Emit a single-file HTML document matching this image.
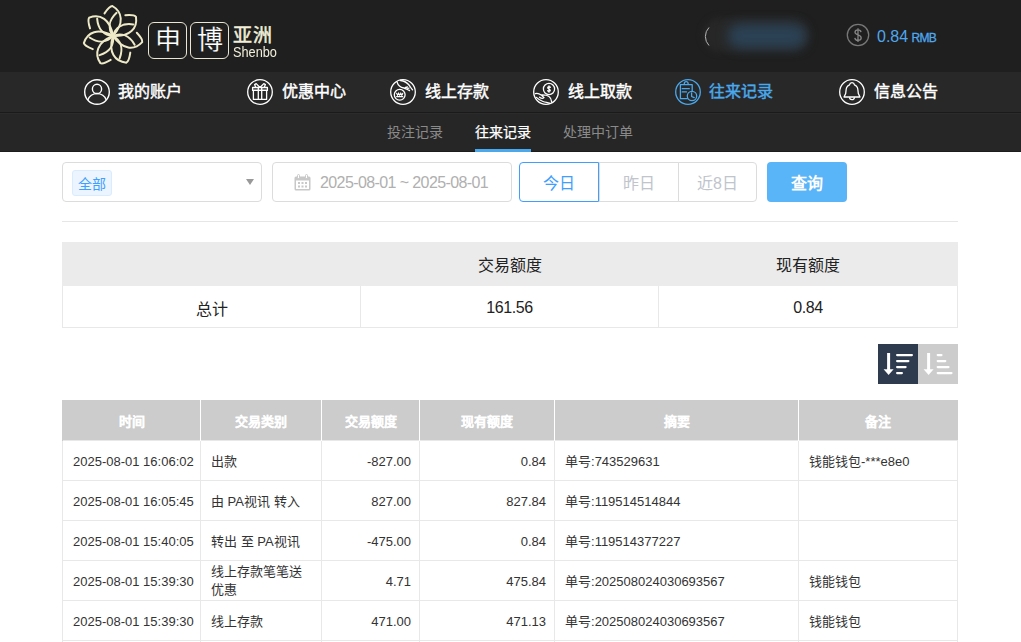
<!DOCTYPE html>
<html lang="zh-CN">
<head>
<meta charset="utf-8">
<style>
*{box-sizing:border-box;margin:0;padding:0}
html,body{width:1021px;height:642px;overflow:hidden;background:#fff;font-family:"Liberation Sans",sans-serif;color:#333}
.abs{position:absolute}
#hdr{position:absolute;left:0;top:0;width:1021px;height:72px;background:#1f1f1f}
#nav{position:absolute;left:0;top:72px;width:1021px;height:40px;background:#282828}
#sep{position:absolute;left:0;top:112px;width:1021px;height:1px;background:#1a1a1a}
#sub{position:absolute;left:0;top:113px;width:1021px;height:39px;background:#262626}
#subline{position:absolute;left:0;top:151px;width:1021px;height:1px;background:#1c1c1c}
.logo-box{position:absolute;top:22px;width:39px;height:37px;border:1.3px solid #e9e6d2;border-radius:6px;color:#fff;font-size:26px;line-height:35px;text-align:center;font-weight:normal;-webkit-text-stroke:0.2px #1f1f1f}
.navi{position:absolute;top:72px;height:40px;color:#fff;font-size:16px;font-weight:normal;-webkit-text-stroke:0.45px currentColor;line-height:40px;white-space:nowrap}
.navi svg{position:absolute;left:0;top:6px}
.navi span{position:absolute;top:0}
.subi{position:absolute;top:113px;height:39px;line-height:39px;font-size:14px;color:#8a8a8a;white-space:nowrap}
.box{position:absolute;border:1px solid #dcdcdc;border-radius:4px;background:#fff}
.btn{position:absolute;top:162px;height:40px;line-height:42px;text-align:center;font-size:16px;color:#c0c4cc;border:1px solid #dcdcdc;background:#fff}
table{border-collapse:collapse;position:absolute;table-layout:fixed}
#sum{left:62px;top:242px;width:895px}
#sum td{border:1px solid #e8e8e8;text-align:center;font-size:16px;color:#222}
#sum tr.h td{background:#ebebeb;height:43px;border-color:#ebebeb}
#sum tr.b td{height:42px;padding-top:2px}
#sum .num{letter-spacing:-0.4px}
#main{left:62px;top:400px;width:895px}
#main th{background:#cccccc;color:#fff;font-size:13px;font-weight:bold;-webkit-text-stroke:0.15px #fff;padding-top:2px;height:40px;border-left:1px solid #fff;text-align:center}
#main th:first-child{border-left:1px solid #ccc}
#main td{height:40px;border:1px solid #e8e8e8;font-size:13px;color:#333;padding:3px 10px 0;line-height:16px;white-space:nowrap}
#main td.r{text-align:right;padding-right:8px}
.num{}
</style>
</head>
<body>
<div id="hdr"></div>
<div id="nav"></div>
<div id="sep"></div>
<div id="sub"></div>
<div class="abs" style="left:0;top:113px;width:1021px;height:1px;background:#2b2b2b"></div>
<div id="subline"></div>

<!-- logo flower -->
<svg class="abs" style="left:80.5px;top:4px" width="63" height="63" viewBox="-30.4 -30.4 60 60">
  <g fill="none" stroke="#eeeac8" stroke-width="1.9" stroke-linecap="round">
    <g transform="rotate(0.0)"><path d="M-8,-21.5 C-5,-26 -2,-28.5 -0.5,-28.5 C9,-23 11,-12 0,0 M0,0 C-5,-7 -4,-15 3.5,-22"/></g>
    <g transform="rotate(51.43)"><path d="M-8,-21.5 C-5,-26 -2,-28.5 -0.5,-28.5 C9,-23 11,-12 0,0 M0,0 C-5,-7 -4,-15 3.5,-22"/></g>
    <g transform="rotate(102.86)"><path d="M-8,-21.5 C-5,-26 -2,-28.5 -0.5,-28.5 C9,-23 11,-12 0,0 M0,0 C-5,-7 -4,-15 3.5,-22"/></g>
    <g transform="rotate(154.29)"><path d="M-8,-21.5 C-5,-26 -2,-28.5 -0.5,-28.5 C9,-23 11,-12 0,0 M0,0 C-5,-7 -4,-15 3.5,-22"/></g>
    <g transform="rotate(205.71)"><path d="M-8,-21.5 C-5,-26 -2,-28.5 -0.5,-28.5 C9,-23 11,-12 0,0 M0,0 C-5,-7 -4,-15 3.5,-22"/></g>
    <g transform="rotate(257.14)"><path d="M-8,-21.5 C-5,-26 -2,-28.5 -0.5,-28.5 C9,-23 11,-12 0,0 M0,0 C-5,-7 -4,-15 3.5,-22"/></g>
    <g transform="rotate(308.57)"><path d="M-8,-21.5 C-5,-26 -2,-28.5 -0.5,-28.5 C9,-23 11,-12 0,0 M0,0 C-5,-7 -4,-15 3.5,-22"/></g>
  </g>
</svg>
<div class="logo-box" style="left:148px">申</div>
<div class="logo-box" style="left:190px">博</div>
<div class="abs" style="left:233px;top:23.5px;font-size:19px;color:#f2efd9;font-weight:normal;-webkit-text-stroke:0.5px #f2efd9;line-height:24px;letter-spacing:1px">亚洲</div>
<div class="abs" style="left:233px;top:43px;font-size:15px;color:#f2efd9;line-height:17px;transform:scaleX(0.85);transform-origin:0 0">Shenbo</div>

<!-- blurred user -->
<div class="abs" style="left:703px;top:18px;width:106px;height:34px;border-radius:17px;background:#272727;filter:blur(3px)"></div>
<div class="abs" style="left:728px;top:24px;width:78px;height:24px;border-radius:12px;background:#2b4255;filter:blur(6px)"></div>
<svg class="abs" style="left:697px;top:24px" width="16" height="26"><path d="M12,3.5 A13,13 0 0 0 12,21.5" fill="none" stroke="#b5b5b5" stroke-width="1"/></svg>

<!-- balance -->
<svg class="abs" style="left:846px;top:23px" width="24" height="24" viewBox="0 0 24 24">
  <circle cx="12" cy="12" r="10.7" fill="none" stroke="#777" stroke-width="1.3"/>
  <path d="M15,9.2 C14.8,7.6 13.5,6.9 12,6.9 C10.2,6.9 9,7.9 9,9.3 C9,12.5 15.2,11.4 15.2,14.9 C15.2,16.4 13.9,17.3 12,17.3 C10.2,17.3 9,16.4 8.8,14.8 M12,5.2 V19" fill="none" stroke="#858585" stroke-width="1.3"/>
</svg>
<div class="abs" style="left:877px;top:27px;font-size:16px;color:#4fa8ee;line-height:20px;white-space:nowrap">0.84 <span style="font-size:12px;-webkit-text-stroke:0.3px #4fa8ee;letter-spacing:-0.7px;margin-left:-1px">RMB</span></div>

<!-- main nav -->
<div class="navi" style="left:84px"><svg width="28" height="28" viewBox="0 0 28 28"><g fill="none" stroke="#fff" stroke-width="1.4"><circle cx="13" cy="14" r="12.3"/><circle cx="13" cy="10.9" r="4.6"/><path d="M3.8,21.9 A9.94,9.94 0 0 1 22.3,21.9"/></g></svg><span style="left:34px">我的账户</span></div>
<div class="navi" style="left:247px"><svg width="28" height="28" viewBox="0 0 28 28"><g fill="none" stroke="#fff" stroke-width="1.3" stroke-linejoin="round"><circle cx="13" cy="14" r="12.3"/><rect x="5.6" y="9.5" width="14.8" height="2.9"/><rect x="6.4" y="12.4" width="13.2" height="9"/><path d="M11.3,9.5V21.4 M14.7,9.5V21.4 M13,9.5 L9.2,5.6 L7.6,6.6 L8.8,9.5 M13,9.5 L16.8,5.6 L18.4,6.6 L17.2,9.5"/></g></svg><span style="left:35px">优惠中心</span></div>
<div class="navi" style="left:390px"><svg width="28" height="28" viewBox="0 0 28 28"><g fill="none" stroke="#fff" stroke-width="1.3" stroke-linecap="round"><circle cx="13" cy="14" r="12.3"/><circle cx="9.7" cy="16.8" r="5.4"/><path d="M6.6,15.2 L7.6,17.2 L8.6,15.2 L9.7,17.2 L10.8,15.2 L11.8,17.2 L12.8,15.2 M6.6,18.6 H12.8" stroke-width="1.1"/><path d="M7,3.8 C8,7.5 11,9.5 14,10 C16,10.5 17.5,12 19.5,12.5 M10.5,2.5 C14,3 17,4.5 19,7 C20.5,9 21.5,11 22.5,11.8 M15.5,9.5 L17.5,9 M17,11 L19,10"/></g></svg><span style="left:35px">线上存款</span></div>
<div class="navi" style="left:533px"><svg width="28" height="28" viewBox="0 0 28 28"><g fill="none" stroke="#fff" stroke-width="1.3" stroke-linecap="round"><circle cx="13" cy="14" r="12.3"/><circle cx="16" cy="11" r="5.6"/><path d="M17.3,9.4 C17.3,8.4 14.7,8.4 14.7,9.7 C14.7,11 17.3,11 17.3,12.3 C17.3,13.6 14.7,13.6 14.7,12.6 M16,7.8 V14.2"/><path d="M2.4,15.7 C4,15 6,15.5 8.6,17.3 L10.9,19.6 C10,20.6 8.5,20.5 6.5,19.2 M8.6,16.9 C11,16.8 14,17 16,18.5 C17.5,19.5 18.5,21.5 18.7,24.1 M3.4,19.4 C5,21 7,22.5 10,23.5 C12,24.2 14,24.5 16.5,25.2"/></g></svg><span style="left:35px">线上取款</span></div>
<div class="navi" style="left:675px;color:#4aa8ec"><svg width="28" height="28" viewBox="0 0 28 28"><g fill="none" stroke="#4aa8ec" stroke-width="1.3" stroke-linecap="round" stroke-linejoin="round"><circle cx="13" cy="14" r="12.3"/><path d="M12.3,20.7 H5.4 V6.7 H17.2 V13.3 M9.3,6.7 V5.6 A1.9,1.9 0 0 1 13.1,5.6 V6.7 M7.2,10.7 H14.3 M7.2,13.9 H11.5"/><circle cx="17" cy="18" r="4.7"/><path d="M16.6,14.8 V18.5 L19.2,19.6"/></g></svg><span style="left:34px">往来记录</span></div>
<div class="navi" style="left:839px"><svg width="28" height="28" viewBox="0 0 28 28"><g fill="none" stroke="#fff" stroke-width="1.3" stroke-linejoin="round"><circle cx="13" cy="14" r="12.3"/><path d="M5,19 H21 L19.3,15.5 C18.8,11 19,8.5 15.5,6.8 C15,4 11,4 10.5,6.8 C7,8.5 7.2,11 6.7,15.5 Z"/><path d="M10.5,19.3 A2.5,2.3 0 0 0 15.5,19.3"/></g></svg><span style="left:35px">信息公告</span></div>

<!-- sub nav -->
<div class="subi" style="left:387px">投注记录</div>
<div class="subi" style="left:475px;color:#fff;-webkit-text-stroke:0.25px #fff">往来记录</div>
<div class="abs" style="left:475px;top:149px;width:56px;height:3px;background:#4aa8ec"></div>
<div class="subi" style="left:563px">处理中订单</div>

<!-- filters -->
<div class="box" style="left:62px;top:162px;width:200px;height:40px"></div>
<div class="abs" style="left:72px;top:170px;width:40px;height:26px;background:#ecf5ff;border:1px solid #d9ecff;border-radius:3px;color:#409eff;font-size:14px;line-height:26px;text-align:center">全部</div>
<svg class="abs" style="left:246px;top:179px" width="8" height="6"><path d="M0,0 H8 L4,6 Z" fill="#999"/></svg>
<div class="box" style="left:272px;top:162px;width:240px;height:40px"></div>
<svg class="abs" style="left:294px;top:174px" width="17" height="17" viewBox="0 0 17 17"><g fill="#c8c8c8"><rect x="0.5" y="2.5" width="16" height="14" rx="1.5"/></g><rect x="2" y="6.5" width="13" height="8.5" fill="#fff"/><g fill="#c8c8c8"><rect x="4" y="8" width="2" height="2"/><rect x="7.5" y="8" width="2" height="2"/><rect x="11" y="8" width="2" height="2"/><rect x="4" y="11.5" width="2" height="2"/><rect x="7.5" y="11.5" width="2" height="2"/><rect x="11" y="11.5" width="2" height="2"/></g><rect x="3.5" y="0.5" width="2" height="4" rx="1" fill="#fff" stroke="#c8c8c8"/><rect x="11.5" y="0.5" width="2" height="4" rx="1" fill="#fff" stroke="#c8c8c8"/></svg>
<div class="abs" style="left:320px;top:173px;font-size:16px;color:#b0b0b0;line-height:20px;letter-spacing:-0.6px;white-space:nowrap">2025-08-01 ~ 2025-08-01</div>

<div class="btn" style="left:599px;width:80px">昨日</div>
<div class="btn" style="left:678px;width:79px;border-radius:0 4px 4px 0">近8日</div>
<div class="btn" style="left:519px;width:80px;border-color:#409eff;color:#409eff;border-radius:4px 0 0 4px">今日</div>
<div class="abs" style="left:767px;top:162px;width:80px;height:40px;border-radius:4px;background:#59b4f8;color:#fff;font-size:16px;font-weight:bold;line-height:43px;text-align:center">查询</div>

<div class="abs" style="left:62px;top:221px;width:896px;height:1px;background:#e6e6e6"></div>

<!-- summary -->
<table id="sum">
  <colgroup><col style="width:298px"><col style="width:298px"><col style="width:299px"></colgroup>
  <tr class="h"><td></td><td>交易额度</td><td>现有额度</td></tr>
  <tr class="b"><td>总计</td><td><span class="num">161.56</span></td><td><span class="num">0.84</span></td></tr>
</table>

<!-- sort buttons -->
<div class="abs" style="left:878px;top:344px;width:40px;height:40px;background:#2e3b4e"></div>
<div class="abs" style="left:918px;top:344px;width:40px;height:40px;background:#cccccc"></div>
<svg class="abs" style="left:878px;top:344px" width="80" height="40" viewBox="0 0 80 40">
  <g fill="#fff">
    <rect x="9.1" y="9" width="3" height="17"/><path d="M5.6,25.3 H15.6 L10.6,31 Z"/>
    <rect x="18" y="10" width="17" height="2.2" rx="1.1"/><rect x="18" y="16" width="13.5" height="2.2" rx="1.1"/><rect x="18" y="22" width="10.7" height="2.2" rx="1.1"/><rect x="18" y="28" width="7" height="2.2" rx="1.1"/>
    <rect x="49.1" y="9" width="3" height="17"/><path d="M45.6,25.3 H55.6 L50.6,31 Z"/>
    <rect x="58.6" y="10" width="6" height="2.2" rx="1.1"/><rect x="58.6" y="16" width="9.8" height="2.2" rx="1.1"/><rect x="58.6" y="22" width="13" height="2.2" rx="1.1"/><rect x="58.6" y="28" width="16" height="2.2" rx="1.1"/>
  </g>
</svg>

<!-- main table -->
<table id="main">
  <colgroup><col style="width:138px"><col style="width:121px"><col style="width:98px"><col style="width:135px"><col style="width:244px"><col style="width:159px"></colgroup>
  <tr><th>时间</th><th>交易类别</th><th>交易额度</th><th>现有额度</th><th>摘要</th><th>备注</th></tr>
  <tr><td><span class="num">2025-08-01 16:06:02</span></td><td>出款</td><td class="r"><span class="num">-827.00</span></td><td class="r"><span class="num">0.84</span></td><td>单号:<span class="num">743529631</span></td><td>钱能钱包-***e8e0</td></tr>
  <tr><td><span class="num">2025-08-01 16:05:45</span></td><td>由 PA视讯 转入</td><td class="r"><span class="num">827.00</span></td><td class="r"><span class="num">827.84</span></td><td>单号:<span class="num">119514514844</span></td><td></td></tr>
  <tr><td><span class="num">2025-08-01 15:40:05</span></td><td>转出 至 PA视讯</td><td class="r"><span class="num">-475.00</span></td><td class="r"><span class="num">0.84</span></td><td>单号:<span class="num">119514377227</span></td><td></td></tr>
  <tr><td><span class="num">2025-08-01 15:39:30</span></td><td style="white-space:normal;line-height:18px;padding-top:1px">线上存款笔笔送<br>优惠</td><td class="r"><span class="num">4.71</span></td><td class="r"><span class="num">475.84</span></td><td>单号:<span class="num">202508024030693567</span></td><td>钱能钱包</td></tr>
  <tr><td><span class="num">2025-08-01 15:39:30</span></td><td>线上存款</td><td class="r"><span class="num">471.00</span></td><td class="r"><span class="num">471.13</span></td><td>单号:<span class="num">202508024030693567</span></td><td>钱能钱包</td></tr>
  <tr><td></td><td></td><td></td><td></td><td></td><td></td></tr>
</table>
</body>
</html>
